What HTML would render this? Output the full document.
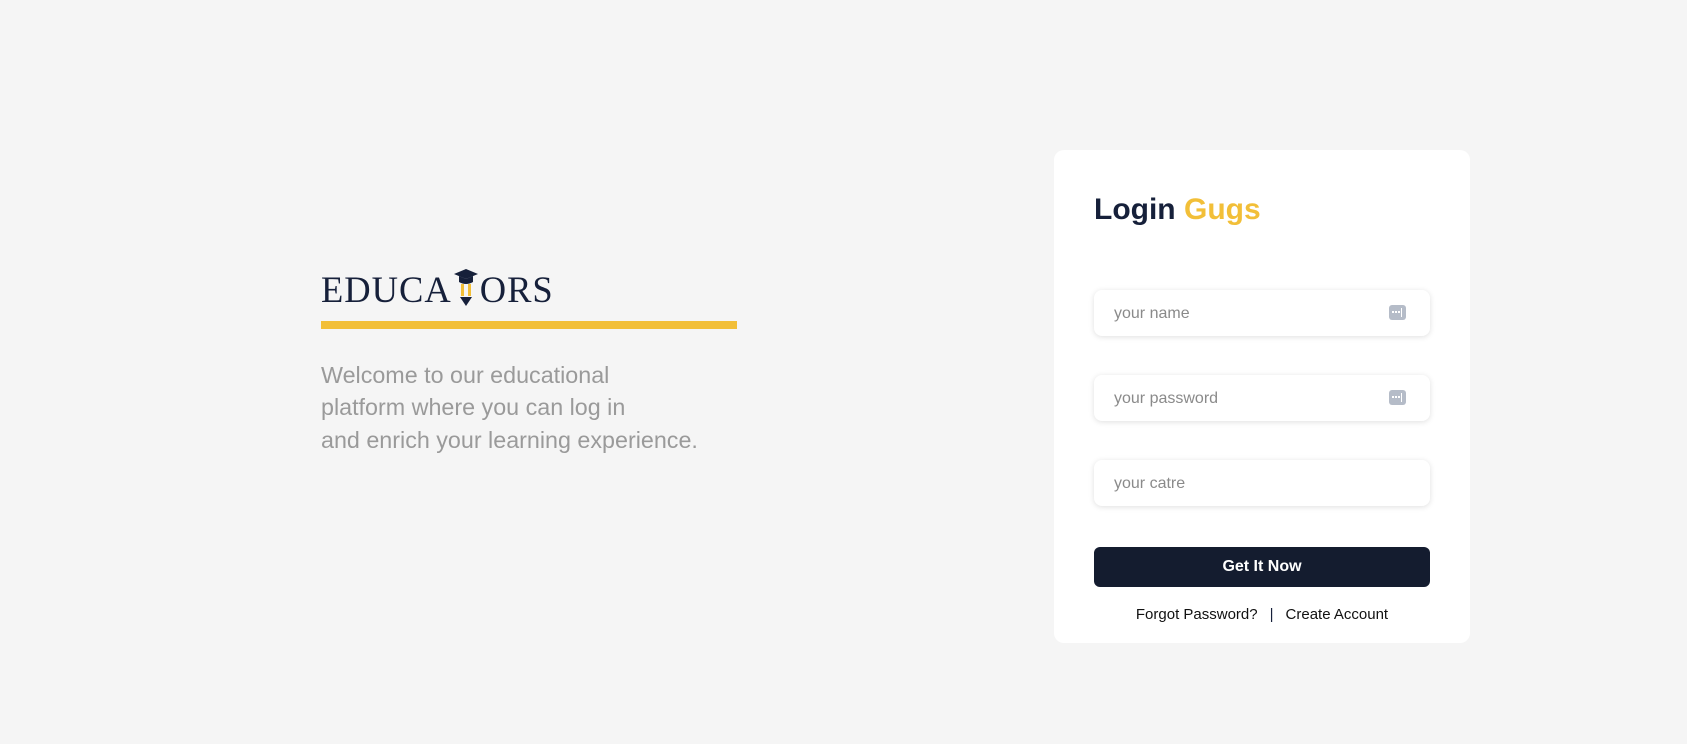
<!DOCTYPE html>
<html><head><meta charset="utf-8"><style>
*{margin:0;padding:0;box-sizing:border-box}
body{width:1687px;height:744px;background:#f5f5f5;font-family:"Liberation Sans",sans-serif;position:relative;overflow:hidden}
.logo{position:absolute;left:321px;top:266px;font-family:"Liberation Serif",serif;font-size:36.5px;color:#16203a;letter-spacing:1px;white-space:nowrap}
.bar{position:absolute;left:321px;top:321px;width:416px;height:8px;background:#f2bf38}
.p{position:absolute;left:321px;top:359px;font-size:23.3px;line-height:32.3px;color:#9a9a9a;width:460px}
.card{position:absolute;left:1054px;top:150px;width:416px;height:493px;background:#fff;border-radius:10px}
h1{position:absolute;left:40px;top:43px;font-size:30px;font-weight:bold;color:#16203a}
h1 span{color:#f2bf38}
.in{position:absolute;left:40px;width:336px;height:46px;border-radius:8px;background:#fff;box-shadow:0 1px 6px rgba(0,0,0,.13);font-size:16px;color:#8a8a8a;padding:15px 0 0 20px}
.ic{position:absolute;right:24px;top:15px;width:17px;height:15px;border-radius:3px;background:#b5bcc8}
.ic:after{content:"";position:absolute;left:3px;top:6px;width:2px;height:2px;background:#fff;box-shadow:3px 0 #fff,6px 0 #fff}
.ic:before{content:"";position:absolute;left:12px;top:3px;width:1px;height:9px;background:#fff}
.btn{position:absolute;left:40px;top:397px;width:336px;height:40px;border-radius:6px;background:#141c2f;color:#fff;font-weight:bold;font-size:16px;text-align:center;line-height:40px}
.links{position:absolute;left:0;width:416px;top:456px;text-align:center;font-size:15px;color:#111}
.links i{font-style:normal;color:#16203a;margin:0 12px}
</style></head><body>
<div class="logo">EDUCA<svg width="26" height="44" viewBox="0 0 26 44" style="vertical-align:-8px;margin:0 1px"><path d="M1 8 L13 3 L25 8 L13 13 Z" fill="#16203a"/><path d="M6 10 v6 q7 4 14 0 v-6 l-7 3 z" fill="#16203a"/><rect x="8" y="18" width="3" height="12" fill="#f2bf38"/><rect x="15" y="18" width="3" height="12" fill="#f2bf38"/><path d="M7 31 h12 l-6 9 z" fill="#16203a"/></svg>ORS</div>
<div class="bar"></div>
<div class="p">Welcome to our educational<br>platform where you can log in<br>and enrich your learning experience.</div>
<div class="card">
<h1>Login <span>Gugs</span></h1>
<div class="in" style="top:140px">your name<div class="ic"></div></div>
<div class="in" style="top:225px">your password<div class="ic"></div></div>
<div class="in" style="top:310px">your catre</div>
<div class="btn">Get It Now</div>
<div class="links">Forgot Password?<i>|</i>Create Account</div>
</div>
</body></html>
